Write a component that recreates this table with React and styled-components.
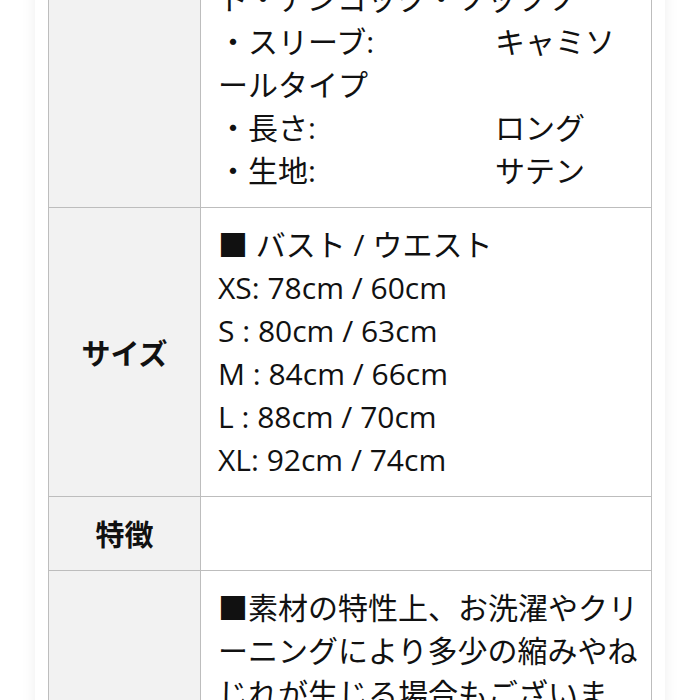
import styled, { createGlobalStyle } from 'styled-components'

const GlobalStyle = createGlobalStyle`
  html, body {
    margin: 0;
    padding: 0;
    background: #fff;
  }
  body {
    font-family: "Open Sans", "Noto Sans CJK JP", sans-serif;
    color: #111;
    overflow: hidden;
  }
`

const Page = styled.div`
  height: 700px;
  overflow: hidden;
`

const Card = styled.div`
  margin: -39px 35px 0;
  padding: 0 13px;
  background: #fff;
  box-shadow: 0 0 14px rgba(0, 0, 0, 0.07);
`

const Table = styled.table`
  width: 100%;
  border-collapse: collapse;
  table-layout: fixed;
  font-size: 30px;
  line-height: 43px;
`

const LabelCell = styled.th`
  width: 152px;
  box-sizing: border-box;
  background: #f2f2f2;
  border: 1px solid #bdbdbd;
  font-family: "Noto Sans CJK JP", sans-serif;
  font-size: 29px;
  font-weight: 700;
  text-align: center;
  vertical-align: middle;
  padding: 15px 0;
`

const ValueCell = styled.td`
  border: 1px solid #bdbdbd;
  padding: 15px 11px 15px 17px;
  vertical-align: top;
  line-break: loose;
`

const Line = styled.div`
  white-space: normal;
`

const Key = styled.span`
  display: inline-block;
  width: 277px;
`

const specs = [
  { key: '・スリーブ:', value: 'キャミソールタイプ' },
  { key: '・長さ:', value: 'ロング' },
  { key: '・生地:', value: 'サテン' },
]

const sizes = [
  'XS: 78cm / 60cm',
  'S : 80cm / 63cm',
  'M : 84cm / 66cm',
  'L : 88cm / 70cm',
  'XL: 92cm / 74cm',
]

const App = () => {
  return (
    <Page>
      <GlobalStyle />
      <Card>
        <Table>
          <tbody>
            <tr>
              <LabelCell />
              <ValueCell>
                <Line>ト・アンコック・ソッツソ</Line>
                {specs.map((s) => (
                  <Line key={s.key}>
                    <Key>{s.key}</Key>
                    {s.value}
                  </Line>
                ))}
              </ValueCell>
            </tr>
            <tr>
              <LabelCell>サイズ</LabelCell>
              <ValueCell>
                <Line>■ バスト / ウエスト</Line>
                {sizes.map((s) => (
                  <Line key={s}>{s}</Line>
                ))}
              </ValueCell>
            </tr>
            <tr>
              <LabelCell>特徴</LabelCell>
              <ValueCell>
                <Line>&nbsp;</Line>
              </ValueCell>
            </tr>
            <tr>
              <LabelCell />
              <ValueCell>
                <Line>
                  ■素材の特性上、お洗濯やクリーニングにより多少の縮みやねじれが生じる場合もございます。
                </Line>
              </ValueCell>
            </tr>
          </tbody>
        </Table>
      </Card>
    </Page>
  )
}

export default App
